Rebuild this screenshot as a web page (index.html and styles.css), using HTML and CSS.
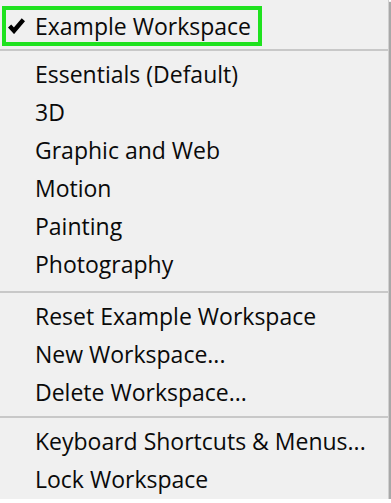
FILE: index.html
```html
<!DOCTYPE html>
<html lang="en">
<head>
  <meta charset="UTF-8">
  <meta name="viewport" content="width=device-width, initial-scale=1.0">
  <title>Workspace Menu</title>
  <link rel="stylesheet" href="styles.css">
</head>
<body>
<div class="menu">
  <div class="item item-checked">
    <span class="check">
      <svg width="17" height="16" viewBox="0 0 17 16"><path d="M1.6 8 L6 12.8 L15.4 1.8" fill="none" stroke="#000" stroke-width="4.4"/></svg>
    </span>
    Example Workspace
  </div>
  <div class="sep sep-first"></div>

  <div class="item">Essentials (Default)</div>
  <div class="item">3D</div>
  <div class="item">Graphic and Web</div>
  <div class="item">Motion</div>
  <div class="item">Painting</div>
  <div class="item">Photography</div>
  <div class="sep"></div>

  <div class="item">Reset Example Workspace</div>
  <div class="item">New Workspace...</div>
  <div class="item">Delete Workspace...</div>
  <div class="sep sep-last"></div>

  <div class="item">Keyboard Shortcuts &amp; Menus...</div>
  <div class="item">Lock Workspace</div>
</div>
</body>
</html>
```
FILE: styles.css
```css
body {
    margin: 0;
    padding: 0;
    background-color: #ffffff;
    font-family: "Open Sans", "Noto Sans", sans-serif;
    color: #0a0a0a;
}

.menu {
    width: 388px;
    height: 499px;
    background-color: #f0f0f0;
    border-right: 1px solid #d0d0d0;
    box-shadow: 2px 2px 1px #a8a8a8;
    overflow: hidden;
}

.item {
    height: 38px;
    line-height: 38px;
    font-size: 23px;
    padding-left: 35px;
    white-space: nowrap;
}

/* selected workspace, outlined in green */
.item-checked {
    display: flex;
    align-items: center;
    width: 223px;
    height: 32px;
    line-height: 32px;
    margin: 6px 0 0 2px;
    padding-left: 29px;
    border: 4px solid #1fe21f;
    position: relative;
}

.check {
    position: absolute;
    left: 2px;
    top: 8px;
    line-height: 0;
}

.sep {
    height: 2px;
    background-color: #c8c8c8;
    margin: 8px 0 4px 0;
}

.sep-first {
    margin-top: 3px;
}

.sep-last {
    margin-top: 5px;
}
```
